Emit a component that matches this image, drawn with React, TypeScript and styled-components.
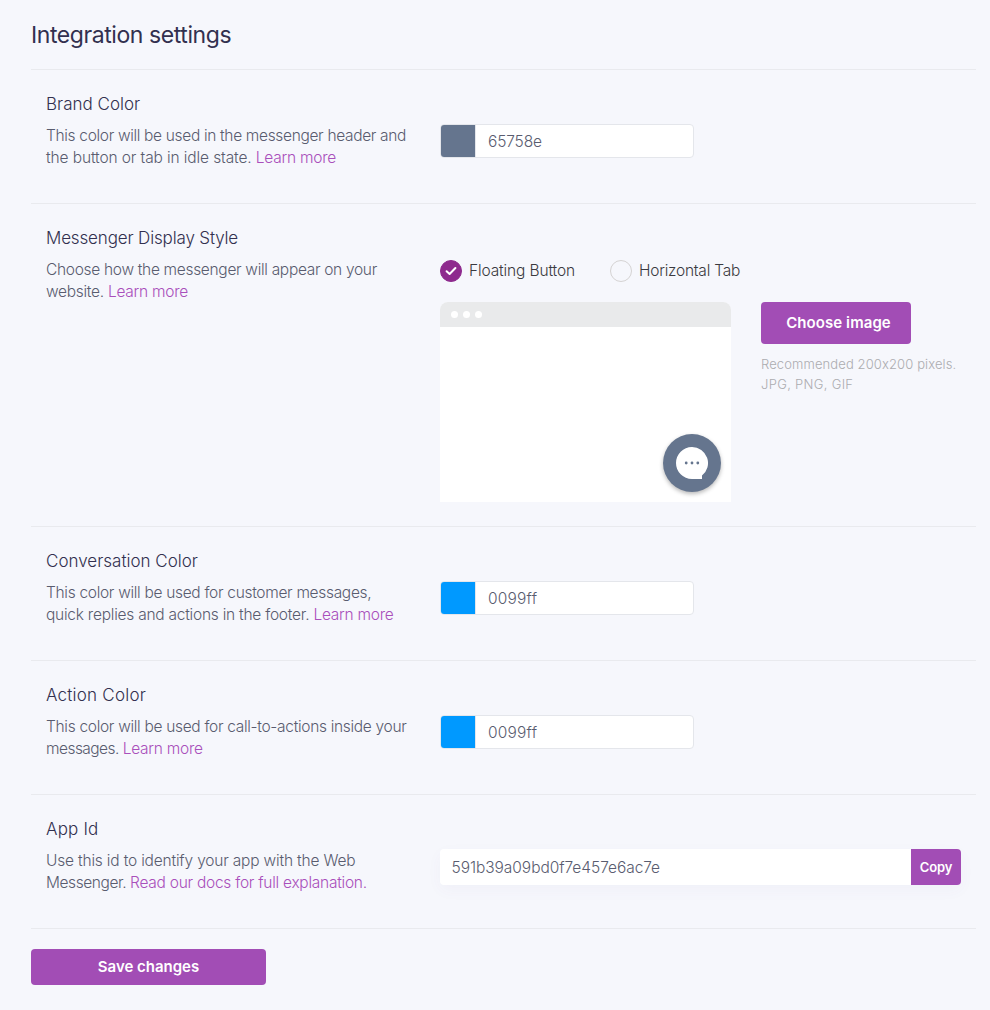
import React from 'react';
import styled, { createGlobalStyle } from 'styled-components';

const GlobalStyle = createGlobalStyle`
  *, *::before, *::after { box-sizing: border-box; }
  body {
    margin: 0;
    background: #f6f7fc;
    font-family: Inter, "Liberation Sans", sans-serif;
    font-weight: 300;
    color: #595c6f;
  }
`;

const Page = styled.main`
  min-height: 1010px;
  padding: 0 14px 25px 31px;
  background: #f6f7fc;
`;

const Title = styled.h1`
  margin: 0;
  height: 69px;
  line-height: 70px;
  font-size: 23px;
  font-weight: 400;
  letter-spacing: -0.42px;
  color: #32304f;
`;

const Section = styled.section<{ $height?: number }>`
  display: grid;
  grid-template-columns: 394px 1fr;
  height: ${({ $height }) => $height ?? 134}px;
  padding: 0 15px;
  border-top: 1px solid #e9eaee;
`;

const Info = styled.div`
  padding-top: 22px;
`;

const Heading = styled.h2<{ $track?: number }>`
  margin: 0 0 9px;
  line-height: 24px;
  font-size: 17px;
  font-weight: 300;
  letter-spacing: ${({ $track }) => $track ?? 0}px;
  color: #32304f;
`;

const Line = styled.span<{ $track?: number }>`
  display: block;
  white-space: nowrap;
  line-height: 22px;
  font-size: 15.5px;
  letter-spacing: ${({ $track }) => $track ?? -0.31}px;
`;

const Link = styled.a<{ $track?: number }>`
  color: #a94fbb;
  text-decoration: none;
  letter-spacing: ${({ $track }) => $track ?? -0.25}px;
`;

const Control = styled.div`
  padding-top: 54px;
`;

const ColorField = styled.div`
  display: flex;
  width: 254px;
  height: 34px;
  overflow: hidden;
  background: #fff;
  border: 1px solid #e4e6eb;
  border-radius: 4px;
`;

const Swatch = styled.span<{ $color: string }>`
  width: 35px;
  background: ${({ $color }) => $color};
  border-right: 1px solid #e4e6eb;
`;

const ColorValue = styled.span<{ $track: number }>`
  padding-left: 12px;
  line-height: 33px;
  font-size: 15.5px;
  letter-spacing: ${({ $track }) => $track}px;
`;

const StyleControl = styled.div`
  padding-top: 56px;
`;

const RadioGroup = styled.div`
  display: flex;
  gap: 35px;
  height: 22px;
`;

const Radio = styled.label<{ $track: number }>`
  display: flex;
  align-items: center;
  gap: 7px;
  white-space: nowrap;
  line-height: 22px;
  font-size: 15.5px;
  letter-spacing: ${({ $track }) => $track}px;
  color: #3a3a40;
`;

const RadioMark = styled.span<{ $checked?: boolean }>`
  display: flex;
  align-items: center;
  justify-content: center;
  width: 22px;
  height: 22px;
  border-radius: 50%;
  border: 1px solid ${({ $checked }) => ($checked ? '#8e2a8e' : '#d5d3d3')};
  background: ${({ $checked }) => ($checked ? '#8e2a8e' : 'transparent')};
`;

const PreviewRow = styled.div`
  display: flex;
  gap: 30px;
  margin-top: 20px;
`;

const Browser = styled.div`
  display: flex;
  flex-direction: column;
  width: 291px;
  height: 200px;
  background: #fff;
  border-radius: 8px 8px 0 0;
  overflow: hidden;
`;

const BrowserBar = styled.div`
  display: flex;
  align-items: center;
  gap: 5px;
  height: 25px;
  padding-left: 11px;
  background: #e9eaeb;
`;

const Dot = styled.i`
  width: 7px;
  height: 7px;
  border-radius: 50%;
  background: #fff;
`;

const BrowserBody = styled.div`
  display: flex;
  flex: 1;
  align-items: flex-end;
  justify-content: flex-end;
  padding: 10px;
`;

const ChatButton = styled.div`
  display: flex;
  align-items: center;
  justify-content: center;
  width: 58px;
  height: 58px;
  border-radius: 50%;
  background: #65758e;
  box-shadow: 0 2px 4px rgba(0, 0, 0, 0.28);
`;

const Upload = styled.div``;

const Button = styled.button`
  display: block;
  padding: 0;
  border: 0;
  border-radius: 4px;
  background: #a24db5;
  color: #fff;
  font-family: inherit;
  font-size: 15px;
  font-weight: 600;
`;

const ChooseButton = styled(Button)`
  width: 150px;
  height: 42px;
  padding: 0 0 2px 5px;
  letter-spacing: 0.08px;
`;

const SaveButton = styled(Button)`
  width: 235px;
  height: 36px;
  padding-bottom: 2px;
  letter-spacing: -0.02px;
`;

const Hint = styled.p`
  margin: 10px 0 0;
`;

const HintLine = styled.span<{ $track: number }>`
  display: block;
  white-space: nowrap;
  line-height: 20px;
  font-size: 13px;
  letter-spacing: ${({ $track }) => $track}px;
  color: #acacb0;
`;

const AppIdField = styled.div`
  display: flex;
  height: 36px;
  border-radius: 4px;
  background: #fff;
  box-shadow: 0 5px 15px rgba(90, 80, 150, 0.04);
`;

const AppIdValue = styled.span`
  flex: 1;
  padding-left: 11.5px;
  line-height: 37px;
  font-size: 15.5px;
  letter-spacing: -0.05px;
`;

const CopyButton = styled(Button)`
  width: 50px;
  border-radius: 0 4px 4px 0;
  font-size: 13px;
  letter-spacing: -0.1px;
`;

const Footer = styled.footer`
  padding-top: 20px;
  border-top: 1px solid #e9eaee;
`;

const CheckIcon = () => (
  <svg width="12" height="10" viewBox="0 0 12 10" fill="none">
    <path d="M1.6 5.2 4.6 8 10.4 2" stroke="#fff" strokeWidth="2" strokeLinecap="round" strokeLinejoin="round" />
  </svg>
);

const ChatIcon = () => (
  <svg width="32" height="32" viewBox="0 0 32 32">
    <path d="M16 0a16 16 0 0 1 10 28.5V32H16A16 16 0 0 1 16 0Z" fill="#fff" />
    <g fill="#65758e">
      <circle cx="10.2" cy="16" r="1.4" />
      <circle cx="16" cy="16" r="1.4" />
      <circle cx="21.8" cy="16" r="1.4" />
    </g>
  </svg>
);

const ColorInput = ({ color, track }: { color: string; track: number }) => (
  <Control>
    <ColorField>
      <Swatch $color={`#${color}`} />
      <ColorValue $track={track}>{color}</ColorValue>
    </ColorField>
  </Control>
);

export default function App() {
  return (
    <>
      <GlobalStyle />
      <Page>
        <Title>Integration settings</Title>

        <Section>
          <Info>
            <Heading>Brand Color</Heading>
            <Line $track={-0.33}>This color will be used in the messenger header and</Line>
            <Line $track={-0.11}>the button or tab in idle state. <Link>Learn more</Link></Line>
          </Info>
          <ColorInput color="65758e" track={-0.15} />
        </Section>

        <Section $height={323}>
          <Info>
            <Heading $track={-0.15}>Messenger Display Style</Heading>
            <Line>Choose how the messenger will appear on your</Line>
            <Line $track={-0.29}>website. <Link>Learn more</Link></Line>
          </Info>
          <StyleControl>
            <RadioGroup>
              <Radio $track={-0.13}>
                <RadioMark $checked><CheckIcon /></RadioMark>
                Floating Button
              </Radio>
              <Radio $track={-0.23}>
                <RadioMark />
                Horizontal Tab
              </Radio>
            </RadioGroup>
            <PreviewRow>
              <Browser>
                <BrowserBar><Dot /><Dot /><Dot /></BrowserBar>
                <BrowserBody>
                  <ChatButton><ChatIcon /></ChatButton>
                </BrowserBody>
              </Browser>
              <Upload>
                <ChooseButton>Choose image</ChooseButton>
                <Hint>
                  <HintLine $track={0.11}>Recommended 200x200 pixels.</HintLine>
                  <HintLine $track={0.31}>JPG, PNG, GIF</HintLine>
                </Hint>
              </Upload>
            </PreviewRow>
          </StyleControl>
        </Section>

        <Section>
          <Info>
            <Heading>Conversation Color</Heading>
            <Line>This color will be used for customer messages,</Line>
            <Line $track={-0.24}>quick replies and actions in the footer. <Link>Learn more</Link></Line>
          </Info>
          <ColorInput color="0099ff" track={0.2} />
        </Section>

        <Section>
          <Info>
            <Heading $track={0.22}>Action Color</Heading>
            <Line $track={-0.31}>This color will be used for call-to-actions inside your</Line>
            <Line $track={-0.54}>messages. <Link>Learn more</Link></Line>
          </Info>
          <ColorInput color="0099ff" track={0.2} />
        </Section>

        <Section>
          <Info>
            <Heading $track={0.18}>App Id</Heading>
            <Line $track={-0.18}>Use this id to identify your app with the Web</Line>
            <Line $track={-0.42}>Messenger. <Link $track={-0.26}>Read our docs for full explanation.</Link></Line>
          </Info>
          <Control>
            <AppIdField>
              <AppIdValue>591b39a09bd0f7e457e6ac7e</AppIdValue>
              <CopyButton>Copy</CopyButton>
            </AppIdField>
          </Control>
        </Section>

        <Footer>
          <SaveButton>Save changes</SaveButton>
        </Footer>
      </Page>
    </>
  );
}
